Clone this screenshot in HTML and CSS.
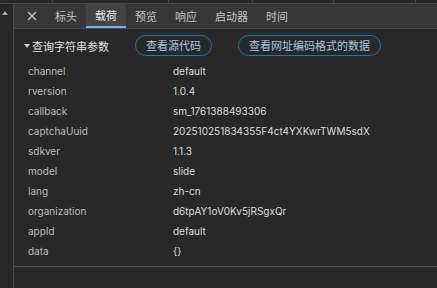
FILE: index.html
```html
<!DOCTYPE html>
<html lang="zh-CN">
<head>
    <meta charset="UTF-8">
    <title>载荷</title>
    <link rel="stylesheet" href="styles.css">
</head>
<body>
    <div class="top-strip">
        <div class="col" style="width: 52px"></div>
        <div class="col" style="width: 115px"></div>
        <div class="col" style="width: 83px"></div>
        <div class="col" style="width: 80px"></div>
        <div class="col" style="width: 81px"></div>
    </div>

    <div class="main">
        <div class="gutter">
            <span class="scroll-up"></span>
        </div>

        <div class="panel">
            <div class="tabs">
                <span class="close">
                    <svg width="10" height="10" viewBox="0 0 10 10">
                        <path d="M1 1 L9 9 M9 1 L1 9" stroke="#c8c8c8" stroke-width="1.4" fill="none"/>
                    </svg>
                </span>
                <span class="tab">标头</span>
                <span class="tab active">载荷</span>
                <span class="tab">预览</span>
                <span class="tab">响应</span>
                <span class="tab">启动器</span>
                <span class="tab">时间</span>
            </div>

            <div class="section-head">
                <span class="title"><span class="caret"></span>查询字符串参数</span>
                <span class="pill">查看源代码</span>
                <span class="pill">查看网址编码格式的数据</span>
            </div>

            <div class="params">
                <div class="row"><span class="key">channel</span><span class="val">default</span></div>
                <div class="row"><span class="key">rversion</span><span class="val">1.0.4</span></div>
                <div class="row"><span class="key">callback</span><span class="val">sm_1761388493306</span></div>
                <div class="row"><span class="key">captchaUuid</span><span class="val">202510251834355F4ct4YXKwrTWM5sdX</span></div>
                <div class="row"><span class="key">sdkver</span><span class="val">1.1.3</span></div>
                <div class="row"><span class="key">model</span><span class="val">slide</span></div>
                <div class="row"><span class="key">lang</span><span class="val">zh-cn</span></div>
                <div class="row"><span class="key">organization</span><span class="val">d6tpAY1oV0Kv5jRSgxQr</span></div>
                <div class="row"><span class="key">appId</span><span class="val">default</span></div>
                <div class="row"><span class="key">data</span><span class="val">{}</span></div>
            </div>
        </div>
    </div>
</body>
</html>
```

FILE: styles.css
```css
:root {
    --bg: #282828;
    --bg-gutter: #262626;
    --bg-tabs: #373737;
    --bg-active: #444444;
    --line: #4a4a4a;
    --accent: #7cacf8;
    --pill-border: #1b79b0;
    --pill-text: #a9c4e6;
    --text-key: #bdbdbd;
    --text-val: #dcdcdc;
}

html, body {
    margin: 0;
    padding: 0;
}

body {
    width: 437px;
    height: 288px;
    overflow: hidden;
    background: var(--bg);
    font-family: Inter, "Noto Sans CJK SC", sans-serif;
    color: var(--text-val);
}

.top-strip {
    display: flex;
    height: 3px;
    border-bottom: 1px solid var(--line);
}

.top-strip .col {
    border-right: 1px solid var(--line);
}

.main {
    display: flex;
    height: 284px;
}

.gutter {
    width: 14px;
    box-sizing: border-box;
    background: var(--bg-gutter);
    border-right: 1px solid var(--line);
    padding-top: 7px;
}

.scroll-up {
    display: block;
    width: 0;
    height: 0;
    margin-left: 2px;
    border-left: 3.5px solid transparent;
    border-right: 3.5px solid transparent;
    border-bottom: 4px solid #a8a8a8;
}

.panel {
    flex: 1;
    display: flex;
    flex-direction: column;
}

.tabs {
    display: flex;
    height: 24px;
    background: var(--bg-tabs);
    border-bottom: 1px solid var(--line);
}

.close {
    width: 28px;
    margin-left: 4px;
    display: flex;
    align-items: center;
    justify-content: center;
}

.tab {
    padding: 0 9px;
    font-family: "Noto Sans CJK SC", sans-serif;
    font-size: 11px;
    line-height: 24px;
    color: #c4c4c4;
    box-sizing: border-box;
}

.tab.active {
    background: var(--bg-active);
    color: #e8e8e8;
    border-bottom: 2px solid var(--accent);
    line-height: 22px;
}

.section-head {
    display: flex;
    align-items: center;
    gap: 26px;
    padding: 6px 0 0 9px;
    height: 21px;
}

.title {
    display: flex;
    align-items: center;
    font-family: "Noto Sans CJK SC", sans-serif;
    font-size: 11px;
    color: #e0e0e0;
}

.caret {
    width: 0;
    height: 0;
    margin: 1px 2px 0 1px;
    border-left: 3px solid transparent;
    border-right: 3px solid transparent;
    border-top: 4px solid #d0d0d0;
}

.pill {
    height: 21px;
    box-sizing: border-box;
    padding: 0 10px;
    border: 1px solid var(--pill-border);
    border-radius: 11px;
    font-family: "Noto Sans CJK SC", sans-serif;
    font-size: 11px;
    line-height: 19px;
    color: var(--pill-text);
}

.params {
    margin-top: 5px;
    padding-bottom: 5px;
    border-bottom: 1px solid #555555;
}

.row {
    display: flex;
    height: 20px;
    align-items: center;
    font-size: 10px;
}

.key {
    width: 145px;
    padding-left: 14px;
    color: var(--text-key);
}

.val {
    color: var(--text-val);
}
```
